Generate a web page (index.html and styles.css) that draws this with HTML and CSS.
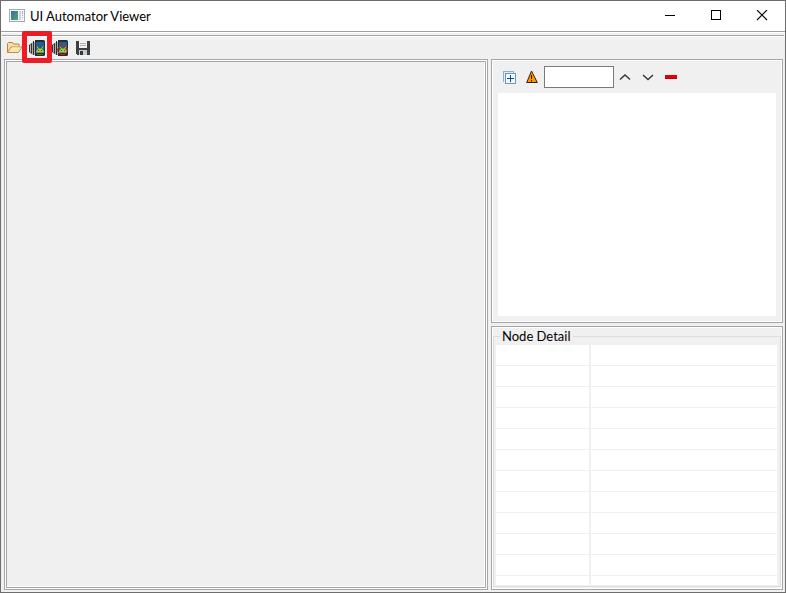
FILE: index.html
```html
<!DOCTYPE html>
<html lang="en">
<head>
<meta charset="utf-8">
<title>UI Automator Viewer</title>
<link rel="stylesheet" href="styles.css">
</head>
<body>
<div class="window">
  <header class="titlebar">
    <svg class="app-icon" width="16" height="14" viewBox="0 0 16 14" shape-rendering="crispEdges" aria-hidden="true">
      <defs><linearGradient id="pane" x1="0" y1="0" x2="1" y2="1"><stop offset="0" stop-color="#3c6f9c"/><stop offset="1" stop-color="#4ba877"/></linearGradient></defs>
      <rect x=".5" y=".5" width="15" height="12" fill="#f4f4f4" stroke="#a9adb2"/>
      <rect x="2" y="2" width="7" height="9" fill="url(#pane)"/>
      <rect x="10" y="2" width="2" height="9" fill="#d2d4d6"/>
      <path d="M13 2h1v3h-1zM13 6h1v1h-1zM13 8h1v1h-1z" fill="#b0b4b8"/>
    </svg>
    <h1 class="title">UI Automator Viewer</h1>
    <div class="controls">
      <button type="button" aria-label="Minimize"><svg width="12" height="12" shape-rendering="crispEdges"><path d="M1 5.500h10" stroke="#000"/></svg></button>
      <button type="button" aria-label="Maximize"><svg width="12" height="12" shape-rendering="crispEdges"><path d="M1.500 .5h9v9h-9z" fill="none" stroke="#000"/></svg></button>
      <button type="button" aria-label="Close"><svg width="12" height="12"><path d="M1 0l10 10M11 0L1 10" stroke="#000" stroke-width="1.100"/></svg></button>
    </div>
  </header>
  <div class="client">
    <div class="toolbar" role="toolbar" aria-label="Main">
      <button type="button" aria-label="Open">
        <svg width="16" height="16" viewBox="0 0 16 16"><path d="M.5 12.500v-9l1-1h4l1 1.500h5.500v2.500" fill="#f8dfa8" stroke="#b98442"/><path d="M.5 12.500l3.500-5.500h11l-3.500 5.500z" fill="#fbe3ae" stroke="#c48d48"/><path d="M5 8h8.500" stroke="#fff4d6"/></svg>
      </button>
      <button type="button" class="marked" aria-label="Device Screenshot">
        <svg width="17" height="16" viewBox="0 0 17 16"><path d="M3.500 2.500L0 5v7l3.500 2.500z" fill="#2d3336"/><path d="M1.500 4.500v8M3.500 3v11M5.500 2v13" stroke="#a8b2ae"/><path d="M4.500 1v14" stroke="#262b2d"/><path d="M6.500 0v16" stroke="#252a2d"/><rect x="6" y="0" width="10" height="16" rx="1.500" fill="#282c2e"/><rect x="7" y="2" width="8" height="11" fill="#255e8e"/><path d="M7 12.500c0-5.500 8-5.500 8 0z" fill="#a9cf22"/><path d="M8 6.500l1.500 2.500M14 6.500l-1.500 2.500" stroke="#a9cf22"/><path d="M9 10.500h1M12 10.500h1" stroke="#2a5468"/><path d="M8 14.500h6" stroke="#596160"/></svg>
      </button>
      <button type="button" aria-label="Device Screenshot with Compressed Hierarchy">
        <svg width="17" height="16" viewBox="0 0 17 16"><path d="M3.500 2.500L0 5v7l3.500 2.500z" fill="#2d3336"/><path d="M1.500 4.500v8M3.500 3v11M5.500 2v13" stroke="#a8b2ae"/><path d="M4.500 1v14" stroke="#262b2d"/><path d="M6.500 0v16" stroke="#252a2d"/><rect x="6" y="0" width="10" height="16" rx="1.500" fill="#282c2e"/><rect x="7" y="2" width="8" height="11" fill="#255e8e"/><path d="M7 12.500c0-5.500 8-5.500 8 0z" fill="#a9cf22"/><path d="M8 6.500l1.500 2.500M14 6.500l-1.500 2.500" stroke="#a9cf22"/><path d="M9 10.500h1M12 10.500h1" stroke="#2a5468"/><circle cx="10.500" cy="10" r="4.800" fill="none" stroke="#e51c1c"/></svg>
      </button>
      <button type="button" aria-label="Save">
        <svg width="16" height="14" viewBox="0 0 16 14" shape-rendering="crispEdges"><path d="M1 0h13l1 1v13H2l-1-1z" fill="#3c4043"/><path d="M4 0h8v7H4z" fill="#f1f1f1"/><path d="M5 2.500h6M5 4.500h6" stroke="#adb0b2"/><path d="M4 9h8v5H4z" fill="#c9cccd"/><path d="M5 10h3v4H5z" fill="#34383b"/></svg>
      </button>
    </div>
    <main class="split">
      <section class="screen frame" aria-label="Screenshot"><div class="canvas"></div></section>
      <div class="side">
        <section class="tree frame" aria-label="Hierarchy">
          <div class="tree-bar" role="toolbar" aria-label="Hierarchy tools">
            <button type="button" aria-label="Expand All"><svg width="13" height="13" shape-rendering="crispEdges"><path d="M.5 10.500V.5h10v2" fill="#dcecf4" stroke="#91aec5"/><path d="M2.500 2.500h10v10h-10z" fill="#eefaff" stroke="#7197b7"/><path d="M4 7.500h7M7.500 4v7" stroke="#0c4e86"/></svg></button>
            <button type="button" aria-label="Toggle NAF Nodes"><svg width="12" height="14"><path d="M5.500 1L.7 12.500h10.600z" fill="#ff9800" stroke="#2b2013" stroke-linejoin="round"/><path d="M5.500 5v4M5.500 10v1.500" stroke="#221500"/></svg></button>
            <input type="text" class="search" aria-label="Search">
            <button type="button" aria-label="Previous"><svg width="13" height="8"><path d="M1 6.500l5-4.500 5 4.500" fill="none" stroke="#333" stroke-width="1.400"/></svg></button>
            <button type="button" aria-label="Next"><svg width="13" height="8"><path d="M1 2l5 4.500L11 2" fill="none" stroke="#333" stroke-width="1.400"/></svg></button>
            <button type="button" aria-label="Clear"><svg width="12" height="4"><path d="M0 0h12v4H0z" fill="#e60000"/><path d="M0 3.500h12" stroke="#c60000"/></svg></button>
          </div>
          <div class="tree-view"></div>
        </section>
        <section class="detail frame">
          <fieldset class="group">
            <legend>Node Detail</legend>
            <div class="table-view">
              <table aria-label="Node Detail">
                <colgroup><col class="key"><col></colgroup>
                <tbody>
                  <tr><td></td><td></td></tr>
                  <tr><td></td><td></td></tr>
                  <tr><td></td><td></td></tr>
                  <tr><td></td><td></td></tr>
                  <tr><td></td><td></td></tr>
                  <tr><td></td><td></td></tr>
                  <tr><td></td><td></td></tr>
                  <tr><td></td><td></td></tr>
                  <tr><td></td><td></td></tr>
                  <tr><td></td><td></td></tr>
                  <tr><td></td><td></td></tr>
                  <tr><td></td><td></td></tr>
                </tbody>
              </table>
            </div>
          </fieldset>
        </section>
      </div>
    </main>
  </div>
</div>
</body>
</html>
```
FILE: styles.css
```css
* { box-sizing: border-box; }

body {
  margin: 0;
  font: 13px/18px Lato, "Noto Sans", sans-serif;
  color: #000;
}

button {
  display: flex;
  align-items: center;
  justify-content: center;
  padding: 0;
  border: 0;
  background: none;
}

svg { display: block; }

.window {
  display: flex;
  flex-direction: column;
  height: 100vh;
  border: 1px solid #6d6d6d;
  background: #f0f0f0;
}

.titlebar {
  display: flex;
  align-items: center;
  height: 30px;
  padding-left: 8px;
  background: #fff;
}

.title {
  flex: 1;
  margin: 0 0 0 5px;
  font-size: 13px;
  font-weight: 400;
}

.controls { display: flex; }

.controls button {
  width: 46px;
  height: 30px;
}

.client {
  flex: 1;
  min-height: 0;
  display: flex;
  flex-direction: column;
  padding: 3px 1px 2px;
  border-top: 1px solid #a0a0a0;
  box-shadow: inset 0 1px #fff;
}

.toolbar {
  display: flex;
  align-items: center;
  gap: 6px;
  height: 24px;
  padding: 1px 0 0 5px;
  border-top: 1px solid #a6a6aa;
  box-shadow: inset 0 1px #fff;
}

.marked { position: relative; }

.marked::after {
  content: "";
  position: absolute;
  inset: -9px -6px -7px -7px;
  border: 5px solid #ed1c24;
  border-radius: 2px;
}

.split {
  flex: 1;
  min-height: 0;
  display: grid;
  grid-template-columns: minmax(0, 121fr) minmax(0, 73fr);
  grid-template-rows: minmax(0, 1fr);
  gap: 3px;
  padding: 0 1px 0 2px;
}

.frame {
  border: 1px solid #a6a6aa;
  box-shadow: inset 0 0 0 1px #fff;
}

.screen { padding: 1px; }

.screen .canvas {
  height: 100%;
  border: 1px solid #a6a6aa;
  box-shadow: inset -1px -1px #fff;
}

.side {
  display: grid;
  grid-template-rows: minmax(0, 1fr) minmax(0, 1fr);
  gap: 3px;
}

.tree {
  display: flex;
  flex-direction: column;
  padding: 5px 6px 6px;
}

.tree-bar {
  display: flex;
  align-items: center;
  gap: 10px;
  height: 24px;
  padding-left: 5px;
  margin-bottom: 4px;
}

.search {
  width: 70px;
  height: 22px;
  margin: 0 -5px 0 -4px;
  padding: 0 4px;
  border: 1px solid #7a7a7a;
  background: #fff;
  font: inherit;
}

.tree-view {
  flex: 1;
  background: #fff;
}

.detail {
  display: flex;
  padding: 0 1px 2px;
}

.group {
  flex: 1;
  min-width: 0;
  display: flex;
  margin: 0;
  padding: 0 3px 1px 2px;
  border: 1px solid #dcdcdc;
}

.group legend {
  margin-left: 4px;
  padding: 0 2px;
}

.table-view {
  flex: 1;
  contain: size;
  overflow: hidden;
  background: #fff;
}

table {
  width: 100%;
  table-layout: fixed;
  border-collapse: separate;
  border-spacing: 0;
}

.key { width: 95px; }

td {
  height: 21px;
  padding: 0;
  border-bottom: 1px solid #f0f0f0;
}

td:first-child { border-right: 2px solid #edf0f4; }
```
